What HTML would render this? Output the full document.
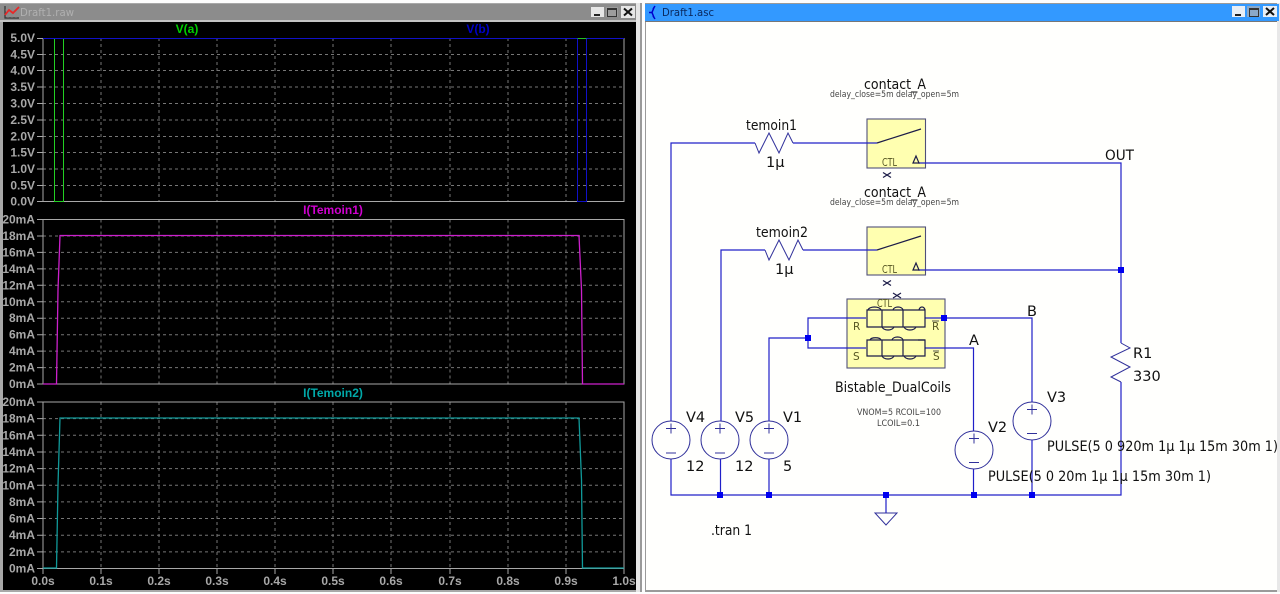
<!DOCTYPE html>
<html><head><meta charset="utf-8"><title>Draft1</title>
<style>
html,body{margin:0;padding:0;width:1280px;height:594px;overflow:hidden;background:#fff}
svg{display:block;filter:blur(.3px)}
.ax text{font:bold 12px "Liberation Sans",sans-serif;fill:#a8a8a8}
.sch text{font-family:"DejaVu Sans","Liberation Sans",sans-serif;fill:#111;font-size:14.500px}
.sch .sm{font-size:9px;fill:#444}
.sch .ctl{font-size:10.500px;fill:#555522}
.w{fill:none;stroke:#2020c8;stroke-width:1.200}
.c{fill:none;stroke:#30309a;stroke-width:1}
.k{fill:none;stroke:#1c1c48;stroke-width:1.200}
.j{fill:#0000f0}
</style></head><body>
<svg width="1280" height="594" viewBox="0 0 1280 594" xmlns="http://www.w3.org/2000/svg">
<rect width="1280" height="594" fill="#fdfdfd"/>
<!-- left window -->
<rect x="0" y="3" width="640" height="589" fill="#a8a8a8"/>
<rect x="0" y="4" width="640" height="17" fill="#8c8c8c"/>
<rect x="0" y="20" width="640" height="2" fill="#c4c4c4"/>
<rect x="3" y="22" width="633" height="568" fill="#000"/>
<rect x="636" y="3" width="4" height="589" fill="#e6e6e6"/>
<rect x="640" y="3" width="2" height="589" fill="#9a9a9a"/>
<!-- left title -->
<g fill="none" stroke-width="1.200">
<path d="M5 6V18H19" stroke="#333"/>
<path d="M5 10H19M5 14H19M8 6V18M12 6V18M16 6V18" stroke="#888" stroke-width=".6"/>
<path d="M5 15L9 10L13 13L19 7" stroke="#e82828" stroke-width="1.800"/>
</g>
<text x="20" y="16" font-family="DejaVu Sans,sans-serif" font-size="10.500" fill="#b0b0b0" textLength="54" lengthAdjust="spacingAndGlyphs">Draft1.raw</text>
<!-- left buttons -->
<rect x="591" y="7" width="13" height="10" fill="#e6e6e6"/><rect x="594" y="14" width="6" height="2" fill="#222"/>
<rect x="606" y="7" width="12" height="10" fill="#9c9c9c"/><rect x="607.500" y="8.500" width="9" height="8" fill="none" stroke="#333"/><rect x="607" y="8" width="10" height="2" fill="#333"/>
<rect x="621" y="6" width="14" height="12" fill="#e6e6e6"/><path d="M624 8.500L632 15.500M632 8.500L624 15.500" stroke="#111" stroke-width="2"/>

<!-- plots -->
<g fill="none" stroke="#a8a8a8" stroke-width="1" stroke-dasharray="3 3" opacity=".7">
<path d="M43 54.500H624M43 70.500H624M43 87H624M43 103.500H624M43 120H624M43 136.500H624M43 152.500H624M43 169H624M43 185.500H624"/>
<path d="M101 38V201M159 38V201M217 38V201M275 38V201M333 38V201M391 38V201M450 38V201M508 38V201M566 38V201"/>
<path d="M43 236H624M43 252.400H624M43 268.900H624M43 285.300H624M43 301.800H624M43 318.200H624M43 334.700H624M43 351.100H624M43 367.600H624"/>
<path d="M101 219.500V384M159 219.500V384M217 219.500V384M275 219.500V384M333 219.500V384M391 219.500V384M450 219.500V384M508 219.500V384M566 219.500V384"/>
<path d="M43 418.600H624M43 435.300H624M43 452H624M43 468.600H624M43 485.300H624M43 501.900H624M43 518.500H624M43 535.200H624M43 551.900H624"/>
<path d="M101 402V568.500M159 402V568.500M217 402V568.500M275 402V568.500M333 402V568.500M391 402V568.500M450 402V568.500M508 402V568.500M566 402V568.500"/>
</g>
<g fill="none" stroke="#a8a8a8" stroke-width="1">
<rect x="43" y="38.500" width="581" height="163"/>
<rect x="43" y="219.500" width="581" height="164.500"/>
<rect x="43" y="402" width="581" height="166.500"/>
<path d="M37 38.500H43M37 54.500H43M37 70.500H43M37 87H43M37 103.500H43M37 120H43M37 136.500H43M37 152.500H43M37 169H43M37 185.500H43M37 201.500H43"/>
<path d="M37 219.500H43M37 236H43M37 252.400H43M37 268.900H43M37 285.300H43M37 301.800H43M37 318.200H43M37 334.700H43M37 351.100H43M37 367.600H43M37 384H43"/>
<path d="M37 402H43M37 418.600H43M37 435.300H43M37 452H43M37 468.600H43M37 485.300H43M37 501.900H43M37 518.500H43M37 535.200H43M37 551.900H43M37 568.500H43"/>
<path d="M43 568.500V574M101 568.500V574M159 568.500V574M217 568.500V574M275 568.500V574M333 568.500V574M391 568.500V574M450 568.500V574M508 568.500V574M566 568.500V574M624 568.500V574"/>
</g>
<g class="ax" text-anchor="end">
<text x="35" y="42">5.0V</text><text x="35" y="58.500">4.5V</text><text x="35" y="74.500">4.0V</text><text x="35" y="91">3.5V</text><text x="35" y="107.500">3.0V</text><text x="35" y="124">2.5V</text><text x="35" y="140.500">2.0V</text><text x="35" y="156.500">1.5V</text><text x="35" y="173">1.0V</text><text x="35" y="189.500">0.5V</text><text x="35" y="205.500">0.0V</text>
<text x="35" y="223.500">20mA</text><text x="35" y="240">18mA</text><text x="35" y="256.400">16mA</text><text x="35" y="272.900">14mA</text><text x="35" y="289.300">12mA</text><text x="35" y="305.800">10mA</text><text x="35" y="322.200">8mA</text><text x="35" y="338.700">6mA</text><text x="35" y="355.100">4mA</text><text x="35" y="371.600">2mA</text><text x="35" y="388">0mA</text>
<text x="35" y="406">20mA</text><text x="35" y="422.600">18mA</text><text x="35" y="439.300">16mA</text><text x="35" y="456">14mA</text><text x="35" y="472.600">12mA</text><text x="35" y="489.300">10mA</text><text x="35" y="505.900">8mA</text><text x="35" y="522.500">6mA</text><text x="35" y="539.200">4mA</text><text x="35" y="555.900">2mA</text><text x="35" y="572.500">0mA</text>
</g>
<g class="ax" text-anchor="middle">
<text x="43" y="585">0.0s</text><text x="101" y="585">0.1s</text><text x="159" y="585">0.2s</text><text x="217" y="585">0.3s</text><text x="275" y="585">0.4s</text><text x="333" y="585">0.5s</text><text x="391" y="585">0.6s</text><text x="450" y="585">0.7s</text><text x="508" y="585">0.8s</text><text x="566" y="585">0.9s</text><text x="624" y="585">1.0s</text>
</g>
<g font-family="Liberation Sans,sans-serif" font-size="12" font-weight="bold" text-anchor="middle">
<text x="187" y="33" fill="#00d000">V(a)</text>
<text x="478" y="33" fill="#0000c8">V(b)</text>
<text x="333" y="214" fill="#d000d0">I(Temoin1)</text>
<text x="333" y="397" fill="#00a8a8">I(Temoin2)</text>
</g>
<!-- traces -->
<g fill="none" stroke-width="1">
<path d="M54.500 38.500V201.500H63.500V38.500" stroke="#22d022"/>
<path d="M43 38.500H577.500V201.500H586.500V38.500H624" stroke="#1010c8"/>
<path d="M577.500 38.500H586.500" stroke="#22c022"/>
<path d="M43 384H56.500L58 290L60 235.500H579L581.500 290L582.500 384H624" stroke="#cc20cc" stroke-width="1.300"/>
<path d="M43 568H56.500L58 485L60 418H579L581.500 480L582.500 568H624" stroke="#109a9a" stroke-width="1.300"/>
</g>

<!-- right window -->
<rect x="645" y="3" width="635" height="589" fill="#9a9a9a"/>
<rect x="645" y="4" width="635" height="17" fill="#3399ff"/>
<rect x="646" y="22" width="631" height="568" fill="#fffffd"/>
<rect x="645" y="21" width="632" height="1" fill="#777"/>
<rect x="1277" y="3" width="3" height="589" fill="#e8e8e8"/>
<rect x="1277" y="4" width="2" height="17" fill="#3399ff"/>
<path d="M649 12.500H652M654 7.500L652 12.500L654 17.500M655 6L653 9M655 19L653 16" fill="none" stroke="#0000cc" stroke-width="1.500"/>
<text x="662" y="16" font-family="DejaVu Sans,sans-serif" font-size="10.500" fill="#0a2a60" textLength="52" lengthAdjust="spacingAndGlyphs">Draft1.asc</text>
<rect x="1232" y="6" width="13" height="11" fill="#e8eef5"/><rect x="1235" y="14" width="6" height="2" fill="#222"/>
<rect x="1247" y="6" width="13" height="11" fill="#8aa8c8"/><rect x="1249.500" y="8.500" width="9" height="8" fill="none" stroke="#333"/><rect x="1249" y="8" width="10" height="2" fill="#333"/>
<rect x="1263" y="6" width="14" height="11" fill="#e8eef5"/><path d="M1266 8L1274 15M1274 8L1266 15" stroke="#111" stroke-width="2"/>

<!-- schematic -->
<g class="sch">
<rect x="867" y="119" width="58.500" height="49" fill="#ffffb0" stroke="#50507a" stroke-width="1.100"/>
<rect x="867" y="227" width="58.500" height="48" fill="#ffffb0" stroke="#50507a" stroke-width="1.100"/>
<rect x="847" y="299" width="98" height="69" fill="#ffffb0" stroke="#50507a" stroke-width="1.100"/>

<path class="w" d="M671 421V143H755M793 143H877"/>
<path class="w" d="M721 421V250H765M803 250H877"/>
<path class="w" d="M769 421V338H808"/>
<path class="w" d="M866 318H808V348H866"/>
<path class="w" d="M925 318H1032V402M1032 440V495"/>
<path class="w" d="M925 348H973.500V431M973.500 469V495"/>
<path class="w" d="M918 163H1121V343M1121 382V495H671V459"/>
<path class="w" d="M918 270H1121"/>
<path class="w" d="M720.500 459V495M769 459V495M886 495V513"/>

<path class="c" d="M755 143L759 153L769 133L779 153L788 133L793 143"/>
<path class="c" d="M765 250L769 260L779 240L789 260L798 240L803 250"/>
<path class="c" d="M1121 343L1130 348L1111 357L1130 367L1111 377L1121 382"/>
<path class="c" d="M875 513H897L886 525Z"/>

<circle class="c" cx="671" cy="440" r="19"/><circle class="c" cx="720" cy="440" r="19"/><circle class="c" cx="769" cy="440" r="19"/>
<circle class="c" cx="974" cy="450" r="19"/><circle class="c" cx="1032" cy="421" r="19"/>
<path class="c" d="M666 428.500H676M671 423.500V433.500M666 453H676M715 428.500H725M720 423.500V433.500M715 453H725M764 428.500H774M769 423.500V433.500M764 453H774M969 438.500H979M974 433.500V443.500M969 462.500H979M1027 409.500H1037M1032 404.500V414.500M1027 433.500H1037"/>

<path class="k" d="M877 143L921 129M877 250L921 236"/>
<path class="k" d="M913 163L916 156L919 163ZM913 270L916 263L919 270Z" stroke-width=".9"/>
<path class="k" d="M883 172.500L891 177.500M891 172.500L883 177.500M883 280.500L891 285.500M891 280.500L883 285.500M893 293L901 298M901 293L893 298" stroke-width="1.300"/>

<path class="k" d="M867 310H925V327H867ZM882 310V327M903 310V327M867 340H925V356H867ZM882 340V356M903 340V356"/>
<path class="k" d="M868 310C869 306 880 306 881 310M893 310C894 306 902 306 903 310M919 310C920 306 924 306 925 310M882 327C884 331 892 331 894 327M904 327C906 331 914 331 916 327M870 340C871 337 880 337 881 340M892 340C893 336 902 336 903 340M918 340H925M882 356C884 360 892 360 894 356M904 356C906 360 914 360 916 356" stroke-width=".9"/>

<rect class="j" x="941" y="315" width="6" height="6"/>
<rect class="j" x="805" y="335" width="6" height="6"/>
<rect class="j" x="1118" y="267" width="6" height="6"/>
<rect class="j" x="717" y="492" width="6" height="6"/>
<rect class="j" x="766" y="492" width="6" height="6"/>
<rect class="j" x="883" y="492" width="6" height="6"/>
<rect class="j" x="971" y="492" width="6" height="6"/>
<rect class="j" x="1029" y="492" width="6" height="6"/>

<text x="864" y="89" textLength="62" lengthAdjust="spacingAndGlyphs">contact_A</text>
<text class="sm" x="830" y="97" textLength="129" lengthAdjust="spacingAndGlyphs">delay_close=5m delay_open=5m</text>
<text x="864" y="197" textLength="62" lengthAdjust="spacingAndGlyphs">contact_A</text>
<text class="sm" x="830" y="205" textLength="129" lengthAdjust="spacingAndGlyphs">delay_close=5m delay_open=5m</text>
<text x="746" y="130" textLength="51" lengthAdjust="spacingAndGlyphs">temoin1</text>
<text x="766" y="167">1µ</text>
<text x="756" y="237" textLength="52" lengthAdjust="spacingAndGlyphs">temoin2</text>
<text x="775" y="274">1µ</text>
<text class="ctl" x="882" y="166" textLength="15" lengthAdjust="spacingAndGlyphs">CTL</text>
<text class="ctl" x="882" y="273" textLength="15" lengthAdjust="spacingAndGlyphs">CTL</text>
<text class="ctl" x="877" y="307" textLength="15" lengthAdjust="spacingAndGlyphs">CTL</text>
<text class="ctl" x="853" y="330">R</text>
<text class="ctl" x="932" y="330">R</text>
<path d="M932 321H939" stroke="#444" stroke-width=".9"/>
<text class="ctl" x="853" y="360">S</text>
<text class="ctl" x="933" y="360">S</text>
<path d="M933 351H939" stroke="#444" stroke-width=".9"/>
<text x="835" y="392" textLength="116" lengthAdjust="spacingAndGlyphs">Bistable_DualCoils</text>
<text class="sm" x="857" y="415" textLength="84" lengthAdjust="spacingAndGlyphs">VNOM=5 RCOIL=100</text>
<text class="sm" x="877" y="426" textLength="43" lengthAdjust="spacingAndGlyphs">LCOIL=0.1</text>
<text x="686" y="422">V4</text><text x="686" y="471">12</text>
<text x="735" y="422">V5</text><text x="735" y="471">12</text>
<text x="783" y="422">V1</text><text x="783" y="471">5</text>
<text x="988" y="432">V2</text><text x="1047" y="402">V3</text>
<text x="1027" y="316">B</text><text x="969" y="345">A</text>
<text x="1105" y="160" textLength="29" lengthAdjust="spacingAndGlyphs">OUT</text>
<text x="1133" y="358">R1</text><text x="1133" y="381">330</text>
<text x="711" y="535" textLength="41" lengthAdjust="spacingAndGlyphs">.tran 1</text>
<text x="1047" y="451" textLength="231" lengthAdjust="spacingAndGlyphs">PULSE(5 0 920m 1µ 1µ 15m 30m 1)</text>
<text x="988" y="481" textLength="223" lengthAdjust="spacingAndGlyphs">PULSE(5 0 20m 1µ 1µ 15m 30m 1)</text>
</g>
</svg>
</body></html>
